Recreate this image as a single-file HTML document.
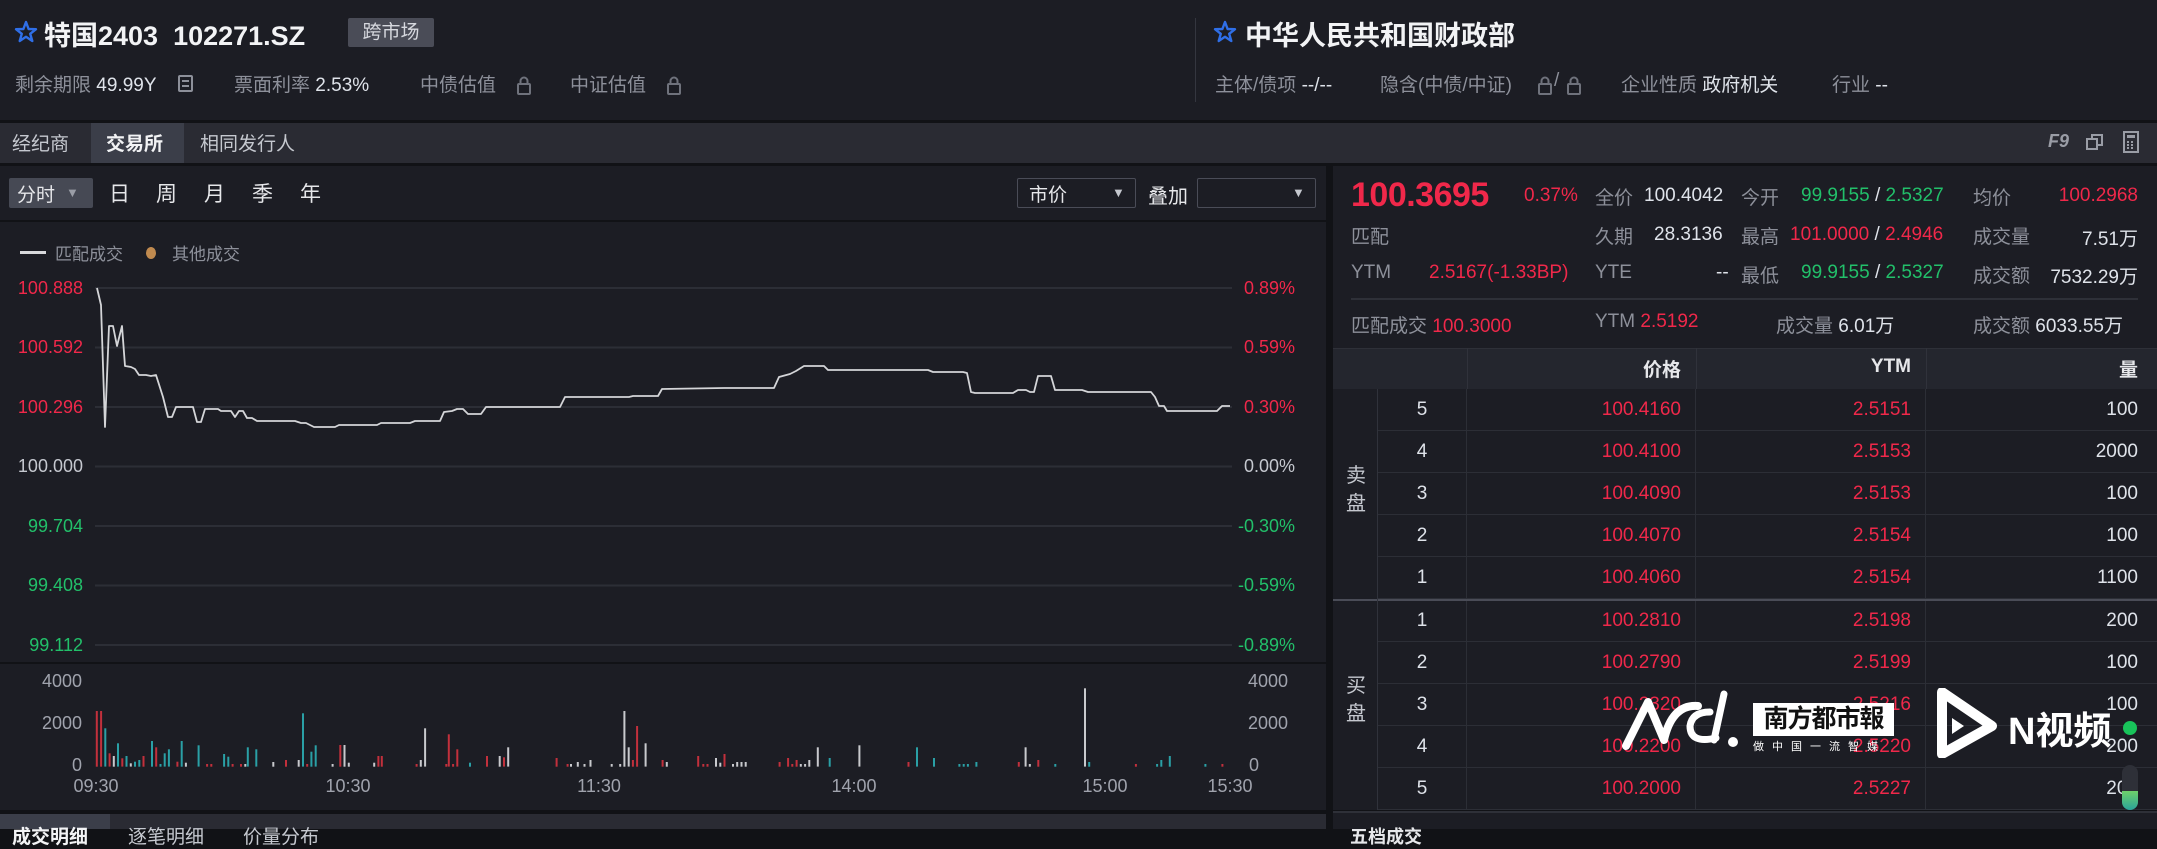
<!DOCTYPE html>
<html><head><meta charset="utf-8">
<style>
*{margin:0;padding:0;box-sizing:border-box}
body{width:2157px;height:829px;background:#111216;font-family:"Liberation Sans","Noto Sans CJK SC",sans-serif;color:#dfe3ea;position:relative;overflow:hidden;font-size:18px}
.a{position:absolute;white-space:nowrap}
.g{color:#8d909a}
.w{color:#dfe3ea}
.r{color:#f0284a}
.gr{color:#22c06a}
.bg{background:#1c1d24}
.rt{text-align:right}
</style></head><body>
<!-- header -->
<div class="a bg" style="left:0;top:0;width:2157px;height:120px"></div>
<svg class="a" style="left:14px;top:20px" width="24" height="24" viewBox="0 0 24 24"><path d="M12 2 L14.6 9 L22 9.2 L16.2 13.8 L18.3 21 L12 16.8 L5.7 21 L7.8 13.8 L2 9.2 L9.4 9Z" fill="none" stroke="#2f6fe8" stroke-width="2.4" stroke-linejoin="round"/></svg>
<div class="a w" style="left:44px;top:14px;font-size:27px;font-weight:bold;color:#f2f3f5">特国2403&nbsp;&nbsp;102271.SZ</div>
<div class="a" style="left:348px;top:18px;width:86px;height:29px;background:#4a4c57;border-radius:2px;color:#d6d8de;font-size:19px;text-align:center;line-height:29px">跨市场</div>
<div class="a" style="left:15px;top:70px;font-size:19px"><span class="g">剩余期限</span> <span class="w">49.99Y</span></div>
<div class="a" style="left:178px;top:75px;width:15px;height:17px;border:2px solid #8d909a;border-radius:2px"><div style="margin:3px 2px;height:2px;background:#8d909a"></div><div style="margin:2px 2px;height:2px;background:#8d909a"></div></div>
<div class="a" style="left:234px;top:70px;font-size:19px"><span class="g">票面利率</span> <span class="w">2.53%</span></div>
<div class="a g" style="left:420px;top:70px;font-size:19px">中债估值</div>
<div class="a g" style="left:570px;top:70px;font-size:19px">中证估值</div>
<svg class="a" style="left:516px;top:76px" width="16" height="19"><rect x="2" y="8" width="12" height="10" rx="1" fill="none" stroke="#6f727c" stroke-width="2"/><path d="M4.5 8V5a3.5 3.5 0 0 1 7 0v3" fill="none" stroke="#6f727c" stroke-width="2"/></svg>
<svg class="a" style="left:666px;top:76px" width="16" height="19"><rect x="2" y="8" width="12" height="10" rx="1" fill="none" stroke="#6f727c" stroke-width="2"/><path d="M4.5 8V5a3.5 3.5 0 0 1 7 0v3" fill="none" stroke="#6f727c" stroke-width="2"/></svg>
<div class="a" style="left:1195px;top:18px;width:1px;height:84px;background:#34363f"></div>
<svg class="a" style="left:1213px;top:20px" width="24" height="24" viewBox="0 0 24 24"><path d="M12 2 L14.6 9 L22 9.2 L16.2 13.8 L18.3 21 L12 16.8 L5.7 21 L7.8 13.8 L2 9.2 L9.4 9Z" fill="none" stroke="#2f6fe8" stroke-width="2.4" stroke-linejoin="round"/></svg>
<div class="a" style="left:1245px;top:14px;font-size:27px;font-weight:bold;color:#f2f3f5">中华人民共和国财政部</div>
<div class="a" style="left:1215px;top:70px;font-size:19px"><span class="g">主体/债项</span> <span class="w">--/--</span></div>
<div class="a g" style="left:1380px;top:70px;font-size:19px">隐含(中债/中证)</div>
<svg class="a" style="left:1537px;top:76px" width="16" height="19"><rect x="2" y="8" width="12" height="10" rx="1" fill="none" stroke="#6f727c" stroke-width="2"/><path d="M4.5 8V5a3.5 3.5 0 0 1 7 0v3" fill="none" stroke="#6f727c" stroke-width="2"/></svg>
<div class="a g" style="left:1554px;top:70px;font-size:19px">/</div>
<svg class="a" style="left:1566px;top:76px" width="16" height="19"><rect x="2" y="8" width="12" height="10" rx="1" fill="none" stroke="#6f727c" stroke-width="2"/><path d="M4.5 8V5a3.5 3.5 0 0 1 7 0v3" fill="none" stroke="#6f727c" stroke-width="2"/></svg>
<div class="a" style="left:1621px;top:70px;font-size:19px"><span class="g">企业性质</span> <span class="w">政府机关</span></div>
<div class="a" style="left:1832px;top:70px;font-size:19px"><span class="g">行业</span> <span class="w">--</span></div>

<!-- tab bar -->
<div class="a" style="left:0;top:123px;width:2157px;height:40px;background:#2a2b33"></div>
<div class="a" style="left:91px;top:123px;width:93px;height:40px;background:#3b3e49"></div>
<div class="a" style="left:12px;top:129px;font-size:19px;color:#c5c8cf">经纪商</div>
<div class="a" style="left:106px;top:129px;font-size:19px;font-weight:bold;color:#f2f3f5">交易所</div>
<div class="a" style="left:200px;top:129px;font-size:19px;color:#c5c8cf">相同发行人</div>
<div class="a" style="left:2048px;top:131px;font-size:18px;font-weight:bold;font-style:italic;color:#9a9da6">F9</div>
<svg class="a" style="left:2085px;top:132px" width="20" height="20"><rect x="2" y="7" width="10" height="10" fill="none" stroke="#9a9da6" stroke-width="2"/><path d="M7 7V3h10v10h-5" fill="none" stroke="#9a9da6" stroke-width="2"/></svg>
<svg class="a" style="left:2122px;top:130px" width="18" height="24"><rect x="2" y="2" width="14" height="20" fill="none" stroke="#9a9da6" stroke-width="2"/><rect x="5" y="5" width="8" height="3" fill="#9a9da6"/><path d="M5 12h2M9 12h2M5 15h2M9 15h2M5 18h2M9 18h2" stroke="#9a9da6" stroke-width="2"/></svg>

<!-- left panel -->
<div class="a bg" style="left:0;top:166px;width:1326px;height:54px"></div>
<div class="a" style="left:9px;top:178px;width:84px;height:30px;background:#464954;border-radius:2px"></div>
<div class="a" style="left:17px;top:180px;font-size:19px;color:#e6e7ea">分时</div>
<div class="a" style="left:66px;top:181px;font-size:13px;color:#9a9da6;line-height:24px">▼</div>
<div class="a" style="left:109px;top:178px;font-size:21px;color:#e6e7ea">日</div>
<div class="a" style="left:156px;top:178px;font-size:21px;color:#e6e7ea">周</div>
<div class="a" style="left:204px;top:178px;font-size:21px;color:#e6e7ea">月</div>
<div class="a" style="left:252px;top:178px;font-size:21px;color:#e6e7ea">季</div>
<div class="a" style="left:300px;top:178px;font-size:21px;color:#e6e7ea">年</div>
<div class="a" style="left:1017px;top:178px;width:119px;height:30px;border:1px solid #4a4c57;border-radius:2px"></div>
<div class="a" style="left:1029px;top:180px;font-size:19px;color:#e6e7ea">市价</div>
<div class="a" style="left:1112px;top:181px;font-size:13px;color:#c5c8cf;line-height:24px">▼</div>
<div class="a" style="left:1148px;top:180px;font-size:20px;color:#e6e7ea">叠加</div>
<div class="a" style="left:1197px;top:178px;width:119px;height:30px;border:1px solid #4a4c57;border-radius:2px"></div>
<div class="a" style="left:1292px;top:181px;font-size:13px;color:#c5c8cf;line-height:24px">▼</div>

<div class="a bg" style="left:0;top:222px;width:1326px;height:440px"></div>
<div class="a" style="left:20px;top:251px;width:26px;height:3px;background:#d8d9dc"></div>
<div class="a g" style="left:55px;top:240px;font-size:17px">匹配成交</div>
<div class="a" style="left:146px;top:247px;width:10px;height:12px;border-radius:50%;background:#c08a4f"></div>
<div class="a g" style="left:172px;top:240px;font-size:17px">其他成交</div>

<svg class="a" style="left:0;top:222px" width="1326" height="440">
<g stroke="#2c2e36" stroke-width="2">
<line x1="95" y1="66" x2="1232" y2="66"/><line x1="95" y1="125.5" x2="1232" y2="125.5"/><line x1="95" y1="185" x2="1232" y2="185"/><line x1="95" y1="244.5" x2="1232" y2="244.5"/><line x1="95" y1="304" x2="1232" y2="304"/><line x1="95" y1="363.5" x2="1232" y2="363.5"/><line x1="95" y1="423" x2="1232" y2="423"/>
</g>
<g transform="translate(0,-222)">
<polyline fill="none" stroke="#d4d5d8" stroke-width="1.8" stroke-linejoin="round" points="97,288 101,305 105,427 109,326 113,326 117,346 122,326 125,366 131,367 135,369 139,375 146,375 151,376 156,375 163,397 168,417 172,417 176,407 193,407 197,422 201,422 205,409 218,409 221,411 231,411 235,417 239,411 243,411 247,418 252,418 257,421 295,421 301,423 306,423 314,427 335,427 339,425 377,425 381,423 410,423 415,421 440,421 444,412 452,411 457,409 463,409 468,414 481,414 486,407 560,407 565,397 629,397 633,396 658,396 662,389 724,388 774,388 779,377 790,374 796,371 804,366 824,366 828,370 928,370 933,372 963,372 967,373 971,392 975,393 1013,393 1018,390 1026,390 1030,392 1034,392 1038,376 1051,376 1055,390 1082,390 1088,392 1151,392 1155,397 1159,406 1164,406 1167,411 1217,411 1222,406 1230,406"/>
</g>
<g font-size="18" font-family="Liberation Sans, sans-serif" text-anchor="end">
<text x="83" y="72" fill="#f0284a">100.888</text>
<text x="83" y="131" fill="#f0284a">100.592</text>
<text x="83" y="191" fill="#f0284a">100.296</text>
<text x="83" y="250" fill="#c5c8cf">100.000</text>
<text x="83" y="310" fill="#22c06a">99.704</text>
<text x="83" y="369" fill="#22c06a">99.408</text>
<text x="83" y="429" fill="#22c06a">99.112</text>
</g>
<g font-size="18" font-family="Liberation Sans, sans-serif">
<text x="1244" y="72" fill="#f0284a">0.89%</text>
<text x="1244" y="131" fill="#f0284a">0.59%</text>
<text x="1244" y="191" fill="#f0284a">0.30%</text>
<text x="1244" y="250" fill="#c5c8cf">0.00%</text>
<text x="1238" y="310" fill="#22c06a">-0.30%</text>
<text x="1238" y="369" fill="#22c06a">-0.59%</text>
<text x="1238" y="429" fill="#22c06a">-0.89%</text>
</g>
</svg>

<div class="a bg" style="left:0;top:664px;width:1326px;height:146px"></div>
<svg class="a" id="vol" style="left:0;top:664px" width="1326" height="146">
<g font-size="18" font-family="Liberation Sans, sans-serif" fill="#a0a3ad">
<text x="82" y="23" text-anchor="end">4000</text>
<text x="82" y="65" text-anchor="end">2000</text>
<text x="82" y="107" text-anchor="end">0</text>
<text x="1288" y="23" text-anchor="end">4000</text>
<text x="1288" y="65" text-anchor="end">2000</text>
<text x="1249" y="107">0</text>
<g text-anchor="middle"><text x="96" y="128">09:30</text><text x="348" y="128">10:30</text><text x="599" y="128">11:30</text><text x="854" y="128">14:00</text><text x="1105" y="128">15:00</text><text x="1230" y="128">15:30</text></g>
</g>
<g id="bars"></g>
</svg>

<div class="a" style="left:0;top:814px;width:1326px;height:15px;background:#2a2b33"></div>
<div class="a" style="left:0;top:814px;width:110px;height:15px;background:#3b3e49"></div>
<div class="a" style="left:12px;top:822px;font-size:19px;font-weight:bold;color:#f2f3f5">成交明细</div>
<div class="a" style="left:128px;top:822px;font-size:19px;color:#c5c8cf">逐笔明细</div>
<div class="a" style="left:243px;top:822px;font-size:19px;color:#c5c8cf">价量分布</div>

<!-- right panel -->
<div class="a bg" style="left:1333px;top:166px;width:824px;height:644px"></div>
<div class="a r" style="left:1351px;top:176px;font-size:34px;font-weight:bold;letter-spacing:-0.5px">100.3695</div>
<div class="a r" style="left:1524px;top:185px;font-size:19px">0.37%</div>
<div class="a g" style="left:1595px;top:183px;font-size:19px">全价</div>
<div class="a w" style="left:1644px;top:185px;font-size:19px">100.4042</div>
<div class="a g" style="left:1741px;top:183px;font-size:19px">今开</div>
<div class="a" style="left:1801px;top:185px;font-size:19px"><span class="gr">99.9155</span> <span class="w">/</span> <span class="gr">2.5327</span></div>
<div class="a g" style="left:1973px;top:183px;font-size:19px">均价</div>
<div class="a r rt" style="left:2020px;width:118px;top:185px;font-size:19px">100.2968</div>

<div class="a g" style="left:1351px;top:222px;font-size:19px">匹配</div>
<div class="a g" style="left:1595px;top:222px;font-size:19px">久期</div>
<div class="a w" style="left:1654px;top:224px;font-size:19px">28.3136</div>
<div class="a g" style="left:1741px;top:222px;font-size:19px">最高</div>
<div class="a" style="left:1790px;top:224px;font-size:19px"><span class="r">101.0000</span> <span class="w">/</span> <span class="r">2.4946</span></div>
<div class="a g" style="left:1973px;top:222px;font-size:19px">成交量</div>
<div class="a w rt" style="left:2020px;width:118px;top:224px;font-size:19px">7.51万</div>

<div class="a g" style="left:1351px;top:262px;font-size:19px">YTM</div>
<div class="a r" style="left:1429px;top:262px;font-size:19px">2.5167(-1.33BP)</div>
<div class="a g" style="left:1595px;top:262px;font-size:19px">YTE</div>
<div class="a w" style="left:1716px;top:262px;font-size:19px">--</div>
<div class="a g" style="left:1741px;top:261px;font-size:19px">最低</div>
<div class="a" style="left:1801px;top:262px;font-size:19px"><span class="gr">99.9155</span> <span class="w">/</span> <span class="gr">2.5327</span></div>
<div class="a g" style="left:1973px;top:261px;font-size:19px">成交额</div>
<div class="a w rt" style="left:2020px;width:118px;top:262px;font-size:19px">7532.29万</div>

<div class="a" style="left:1351px;top:298px;width:787px;height:2px;background:#2e3038"></div>
<div class="a" style="left:1351px;top:311px;font-size:19px"><span class="g">匹配成交</span> <span class="r">100.3000</span></div>
<div class="a" style="left:1595px;top:311px;font-size:19px"><span class="g">YTM</span> <span class="r">2.5192</span></div>
<div class="a" style="left:1776px;top:311px;font-size:19px"><span class="g">成交量</span> <span class="w">6.01万</span></div>
<div class="a" style="left:1973px;top:311px;font-size:19px"><span class="g">成交额</span> <span class="w">6033.55万</span></div>

<!-- table -->
<div class="a" style="left:1333px;top:348px;width:824px;height:41px;background:#24262e;border-top:1px solid #2e3038"></div>
<div class="a" style="left:1467px;top:348px;width:1px;height:41px;background:#30323b"></div>
<div class="a" style="left:1696px;top:348px;width:1px;height:41px;background:#30323b"></div>
<div class="a" style="left:1926px;top:348px;width:1px;height:41px;background:#30323b"></div>
<div class="a rt" style="left:1560px;width:121px;top:355px;font-size:19px;font-weight:bold;color:#e6e7ea">价格</div>
<div class="a rt" style="left:1790px;width:121px;top:356px;font-size:19px;font-weight:bold;color:#e6e7ea">YTM</div>
<div class="a rt" style="left:2040px;width:98px;top:355px;font-size:19px;font-weight:bold;color:#e6e7ea">量</div>
<div id="book"></div>
<div class="a" style="left:1333px;top:599px;width:824px;height:2px;background:#4a4c57"></div>
<div class="a" style="left:1377px;top:389px;width:1px;height:421px;background:#30323b"></div>
<div class="a" style="left:1346px;top:462px;font-size:20px;color:#c5c8cf;line-height:28px;width:22px;white-space:normal">卖<br>盘</div>
<div class="a" style="left:1346px;top:672px;font-size:20px;color:#c5c8cf;line-height:28px;width:22px;white-space:normal">买<br>盘</div>
<div class="a" style="left:1333px;top:811px;width:824px;height:18px;background:#1c1d24;border-top:2px solid #2e3038"></div>
<div class="a" style="left:1350px;top:823px;font-size:18px;font-weight:bold;color:#e6e7ea">五档成交</div>

<!-- watermark -->
<svg class="a" style="left:1620px;top:688px" width="130" height="66" viewBox="0 0 130 66"><path d="M6 58 L28 14 L44 52 Q52 16 78 18" fill="none" stroke="#fff" stroke-width="8" stroke-linecap="round" stroke-linejoin="round"/><path d="M96 50 Q70 56 70 38 Q72 24 90 24" fill="none" stroke="#fff" stroke-width="7" stroke-linecap="round"/><path d="M104 6 L94 52" stroke="#fff" stroke-width="7" stroke-linecap="round"/><circle cx="113" cy="54" r="5" fill="#fff"/></svg>
<div class="a" style="left:1753px;top:703px;width:141px;height:33px;background:#fff;color:#111;font-size:25px;font-weight:bold;line-height:33px;text-align:center;letter-spacing:-1px">南方都市報</div>
<div class="a" style="left:1753px;top:738px;font-size:11px;color:#fff;letter-spacing:8px">做中国一流智媒</div>
<svg class="a" style="left:1934px;top:688px" width="66" height="70" viewBox="0 0 66 70"><path d="M8 4 L58 38 L8 66 Z" fill="none" stroke="#fff" stroke-width="10" stroke-linejoin="round"/><path d="M18 30 L30 38 L18 46Z" fill="#fff"/></svg>
<div class="a" style="left:2008px;top:700px;font-size:38px;font-weight:bold;color:#fff">N视频</div>
<div class="a" style="left:2123px;top:721px;width:14px;height:14px;border-radius:50%;background:#18c35a"></div>
<div class="a" style="left:2122px;top:765px;width:16px;height:45px;border-radius:8px;background:#2e3038"></div>
<div class="a" style="left:2122px;top:791px;width:16px;height:19px;border-radius:0 0 8px 8px;background:linear-gradient(#6ed06a,#2aa39a)"></div>

<script>
var rows=[["5","100.4160","2.5151","100"],["4","100.4100","2.5153","2000"],["3","100.4090","2.5153","100"],["2","100.4070","2.5154","100"],["1","100.4060","2.5154","1100"],["1","100.2810","2.5198","200"],["2","100.2790","2.5199","100"],["3","100.2320","2.5216","100"],["4","100.2200","2.5220","200"],["5","100.2000","2.5227","200"]];
var tops=[389,431,473,515,557,600,642,684,726,768];var h="";
rows.forEach(function(r,i){var t=tops[i];
h+='<div class="a" style="left:1377px;top:'+(t+41)+'px;width:780px;height:1px;background:#2c2e36"></div>';
h+='<div class="a" style="left:1466px;top:'+t+'px;width:1px;height:42px;background:#2c2e36"></div><div class="a" style="left:1695px;top:'+t+'px;width:1px;height:42px;background:#2c2e36"></div><div class="a" style="left:1925px;top:'+t+'px;width:1px;height:42px;background:#2c2e36"></div>';
h+='<div class="a" style="left:1400px;width:44px;text-align:center;top:'+(t+10)+'px;font-size:19px;color:#dfe3ea">'+r[0]+'</div>';
h+='<div class="a r rt" style="left:1560px;width:121px;top:'+(t+10)+'px;font-size:19px">'+r[1]+'</div>';
h+='<div class="a r rt" style="left:1790px;width:121px;top:'+(t+10)+'px;font-size:19px">'+r[2]+'</div>';
h+='<div class="a w rt" style="left:2040px;width:98px;top:'+(t+10)+'px;font-size:19px">'+r[3]+'</div>';});
document.getElementById("book").innerHTML=h;
var b="113 r 213,118 r 213,123 t 265,128 r 340,133 w 348,138 t 310,143 r 355,148 t 348,153 w 370,158 t 365,163 t 360,168 r 348,178 t 303,183 r 322,188 t 372,193 t 340,198 t 328,208 r 365,213 t 303,218 w 368,233 t 316,243 r 372,248 r 372,263 t 342,268 t 350,273 r 372,283 r 372,288 w 372,291 t 322,301 t 328,321 w 366,336 r 360,351 w 360,356 t 220,361 r 372,366 t 335,371 t 316,391 w 372,400 r 315,405 w 315,410 w 368,440 w 368,445 r 348,449 r 348,490 r 372,495 w 360,500 w 265,525 r 372,528 r 283,533 r 372,538 r 328,553 t 368,573 r 348,588 w 348,593 r 352,598 w 322,655 r 354,668 r 372,672 w 372,680 w 366,688 w 372,695 w 360,720 w 372,730 w 372,735 w 213,740 w 322,745 r 360,750 r 258,760 w 310,780 r 360,785 w 366,822 r 348,828 r 372,833 r 372,843 w 354,848 w 368,853 r 342,863 w 372,868 w 366,873 w 366,878 w 366,918 r 366,928 r 354,933 r 372,938 r 360,943 w 372,948 w 372,953 w 360,963 w 322,977 t 354,1012 w 316,1070 r 366,1080 t 322,1100 t 354,1130 t 372,1135 t 372,1140 t 372,1150 t 366,1200 r 366,1208 w 322,1213 w 372,1223 r 360,1243 t 372,1278 w 145,1283 t 366,1338 r 372,1363 t 372,1368 t 360,1378 t 348,1420 t 372,1440 r 372".split(",");
var c={r:"#c2303c",t:"#2aa0a6",w:"#c8c9cd"},s="";
b.forEach(function(e){var p=e.split(" ");var x=(+p[0])/1.179;var top=(+p[2])/3-24;var hh=(380-(+p[2]))/3;s+='<rect x="'+x.toFixed(1)+'" y="'+top.toFixed(1)+'" width="2" height="'+hh.toFixed(1)+'" fill="'+c[p[1]]+'"/>';});
document.getElementById("bars").innerHTML=s;
</script>
</body></html>
